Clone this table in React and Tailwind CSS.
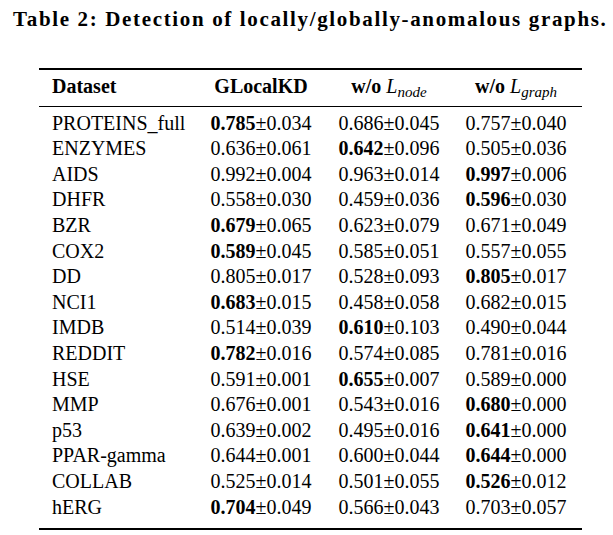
import React from "react";

const rows = [
  ["PROTEINS_full", ["0.785", "0.034", true], ["0.686", "0.045"], ["0.757", "0.040"]],
  ["ENZYMES", ["0.636", "0.061"], ["0.642", "0.096", true], ["0.505", "0.036"]],
  ["AIDS", ["0.992", "0.004"], ["0.963", "0.014"], ["0.997", "0.006", true]],
  ["DHFR", ["0.558", "0.030"], ["0.459", "0.036"], ["0.596", "0.030", true]],
  ["BZR", ["0.679", "0.065", true], ["0.623", "0.079"], ["0.671", "0.049"]],
  ["COX2", ["0.589", "0.045", true], ["0.585", "0.051"], ["0.557", "0.055"]],
  ["DD", ["0.805", "0.017"], ["0.528", "0.093"], ["0.805", "0.017", true]],
  ["NCI1", ["0.683", "0.015", true], ["0.458", "0.058"], ["0.682", "0.015"]],
  ["IMDB", ["0.514", "0.039"], ["0.610", "0.103", true], ["0.490", "0.044"]],
  ["REDDIT", ["0.782", "0.016", true], ["0.574", "0.085"], ["0.781", "0.016"]],
  ["HSE", ["0.591", "0.001"], ["0.655", "0.007", true], ["0.589", "0.000"]],
  ["MMP", ["0.676", "0.001"], ["0.543", "0.016"], ["0.680", "0.000", true]],
  ["p53", ["0.639", "0.002"], ["0.495", "0.016"], ["0.641", "0.000", true]],
  ["PPAR-gamma", ["0.644", "0.001"], ["0.600", "0.044"], ["0.644", "0.000", true]],
  ["COLLAB", ["0.525", "0.014"], ["0.501", "0.055"], ["0.526", "0.012", true]],
  ["hERG", ["0.704", "0.049", true], ["0.566", "0.043"], ["0.703", "0.057"]],
];

function Val({ v }) {
  const [m, s, b] = v;
  return (
    <div className="text-center whitespace-nowrap">
      {b ? <span className="font-bold">{m}</span> : <span>{m}</span>}±{s}
    </div>
  );
}

export default function App() {
  return (
    <div
      className="w-[613px] h-[535px] bg-white text-black overflow-hidden"
      style={{ fontFamily: '"Liberation Serif", "DejaVu Serif", serif' }}
    >
      <div className="pl-[13px] pt-[9px] text-[21px] leading-[21px] font-bold whitespace-nowrap tracking-[1.65px]">
        Table 2: Detection of locally/globally-anomalous graphs.
      </div>
      <div className="ml-[39px] mt-[38px] w-[543px] text-[20px] leading-[25.6px]">
        <div className="h-[2px] bg-black" />
        <div className="grid grid-cols-[155px_134px_122px_132px] pt-[4px] pb-[6px]">
          <div className="pl-[13px] font-bold">Dataset</div>
          <div className="text-center font-bold">GLocalKD</div>
          <div className="text-center whitespace-nowrap">
            <span className="font-bold">w/o </span>
            <i>L</i>
            <sub className="italic">node</sub>
          </div>
          <div className="text-center whitespace-nowrap">
            <span className="font-bold">w/o </span>
            <i>L</i>
            <sub className="italic">graph</sub>
          </div>
        </div>
        <div className="h-px bg-black" />
        <div className="pt-[4px] pb-[8px]">
          {rows.map((r) => (
            <div key={r[0]} className="grid grid-cols-[155px_134px_122px_132px]">
              <div className="pl-[13px] whitespace-nowrap">{r[0]}</div>
              <Val v={r[1]} />
              <Val v={r[2]} />
              <Val v={r[3]} />
            </div>
          ))}
        </div>
        <div className="h-[2px] bg-black" />
      </div>
    </div>
  );
}
